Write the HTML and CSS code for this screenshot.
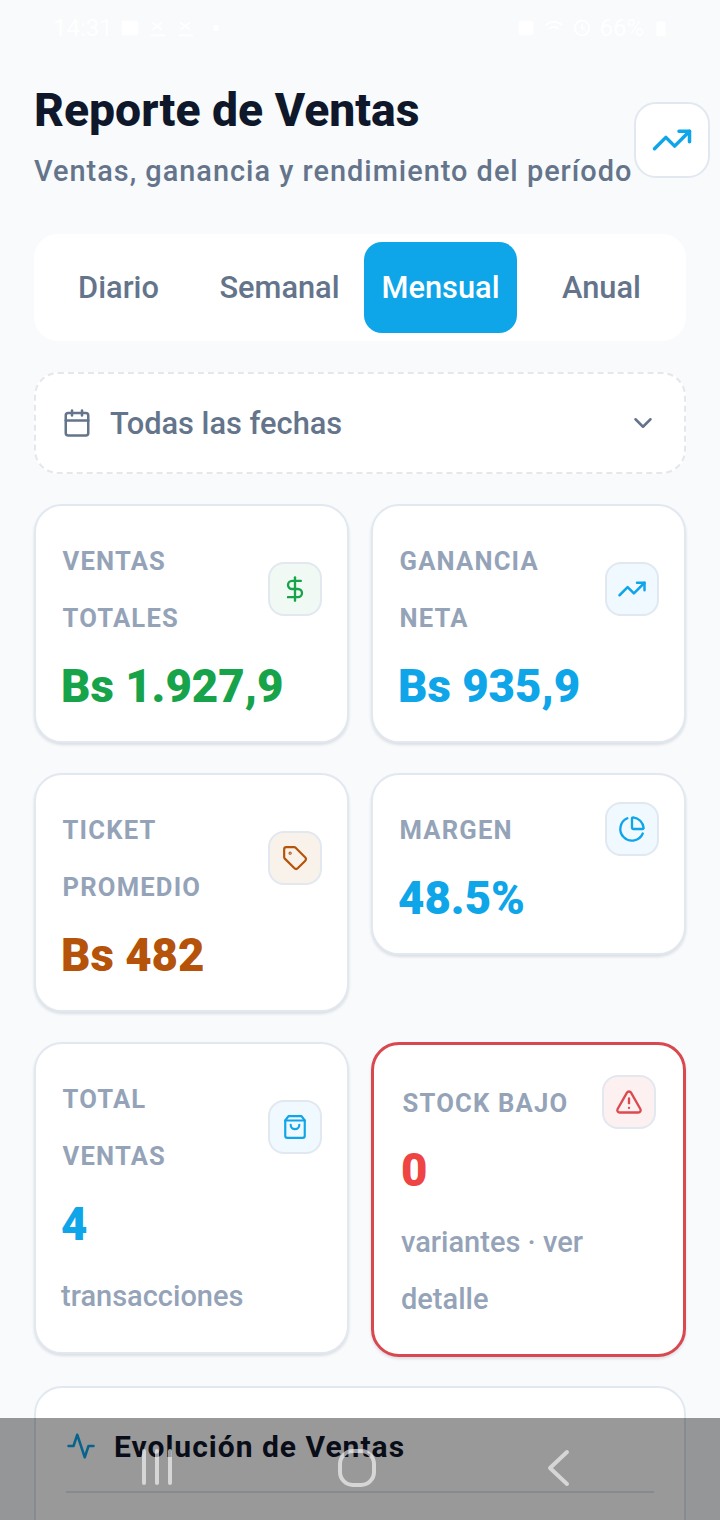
FILE: index.html
```html
<!DOCTYPE html>
<html lang="es">
<head>
  <meta charset="UTF-8" />
  <meta name="viewport" content="width=device-width, initial-scale=1.0" />
  <title>Reporte de Ventas</title>
  <link rel="stylesheet" href="styles.css">
</head>
<body>
  <div class="status-bar">
    <div class="status-side">
      <span>14:31</span>
      <svg class="status-icon" viewBox="0 0 24 24"><rect x="3" y="4" width="18" height="16" rx="2" fill="#fff"/></svg>
      <svg class="status-icon" viewBox="0 0 24 24" fill="none" stroke="#fff" stroke-width="2"><path d="M4 20h16M6 14l10-8M6 6l10 8"/></svg>
      <svg class="status-icon" viewBox="0 0 24 24" fill="none" stroke="#fff" stroke-width="2"><path d="M4 20h16M6 14l10-8M6 6l10 8"/></svg>
      <span class="status-dot"></span>
    </div>
    <div class="status-side">
      <svg class="status-icon" viewBox="0 0 24 24"><rect x="4" y="4" width="16" height="16" rx="3" fill="#fff"/></svg>
      <svg class="status-icon" viewBox="0 0 24 24" fill="none" stroke="#fff" stroke-width="2"><path d="M3 9c5-5 13-5 18 0M7 13c3-3 7-3 10 0"/></svg>
      <svg class="status-icon" viewBox="0 0 24 24" fill="none" stroke="#fff" stroke-width="2"><circle cx="12" cy="12" r="8"/><path d="M12 8v4l3 2"/></svg>
      <span>66%</span>
      <svg class="status-icon" viewBox="0 0 24 24"><rect x="7" y="5" width="10" height="16" rx="2" fill="#fff"/></svg>
    </div>
  </div>

  <main class="page">
    <header class="header">
      <div class="header-text">
        <h1>Reporte de Ventas</h1>
        <p>Ventas, ganancia y rendimiento del período</p>
      </div>
      <button class="header-btn">
        <svg class="icon icon-lg blue" viewBox="0 0 24 24"><polyline points="22 7 13.5 15.5 8.5 10.5 2 17"/><polyline points="16 7 22 7 22 13"/></svg>
      </button>
    </header>

    <nav class="tabs">
      <button class="tab">Diario</button>
      <button class="tab">Semanal</button>
      <button class="tab active">Mensual</button>
      <button class="tab">Anual</button>
    </nav>

    <div class="date-filter">
      <svg class="icon icon-date" viewBox="0 0 24 24"><path d="M8 2v4"/><path d="M16 2v4"/><rect x="3" y="4" width="18" height="18" rx="2"/><path d="M3 10h18"/></svg>
      <span class="date-text">Todas las fechas</span>
      <svg class="icon icon-chevron" viewBox="0 0 24 24"><polyline points="6 9 12 15 18 9"/></svg>
    </div>

    <section class="grid">
      <div class="card">
        <div class="card-head">
          <span class="label">Ventas totales</span>
          <span class="badge badge-green">
            <svg class="icon green" viewBox="0 0 24 24"><path d="M12 2v20"/><path d="M17 5H9.5a3.5 3.5 0 0 0 0 7h5a3.5 3.5 0 0 1 0 7H6"/></svg>
          </span>
        </div>
        <div class="value green">Bs 1.927,9</div>
      </div>

      <div class="card">
        <div class="card-head">
          <span class="label">Ganancia neta</span>
          <span class="badge badge-blue">
            <svg class="icon icon-md blue" viewBox="0 0 24 24"><polyline points="22 7 13.5 15.5 8.5 10.5 2 17"/><polyline points="16 7 22 7 22 13"/></svg>
          </span>
        </div>
        <div class="value blue">Bs 935,9</div>
      </div>

      <div class="card">
        <div class="card-head">
          <span class="label">Ticket promedio</span>
          <span class="badge badge-brown">
            <svg class="icon icon-sm brown" viewBox="0 0 24 24"><path d="M12.586 2.586A2 2 0 0 0 11.172 2H4a2 2 0 0 0-2 2v7.172a2 2 0 0 0 .586 1.414l8.704 8.704a2.426 2.426 0 0 0 3.42 0l6.58-6.58a2.426 2.426 0 0 0 0-3.42z"/><circle cx="7.5" cy="7.5" r=".5"/></svg>
          </span>
        </div>
        <div class="value brown">Bs 482</div>
      </div>

      <div class="card">
        <div class="card-head">
          <span class="label">Margen</span>
          <span class="badge badge-blue">
            <svg class="icon blue" viewBox="0 0 24 24"><path d="M21 12c.552 0 1.005-.449.95-.998a10 10 0 0 0-8.953-8.951c-.55-.055-.998.398-.998.95v8a1 1 0 0 0 1 1z"/><path d="M21.21 15.89A10 10 0 1 1 8 2.83"/></svg>
          </span>
        </div>
        <div class="value blue">48.5%</div>
      </div>

      <div class="card">
        <div class="card-head">
          <span class="label">Total ventas</span>
          <span class="badge badge-blue">
            <svg class="icon icon-sm blue" viewBox="0 0 24 24"><path d="M6 2 3 6v14a2 2 0 0 0 2 2h14a2 2 0 0 0 2-2V6l-3-4Z"/><path d="M3 6h18"/><path d="M16 10a4 4 0 0 1-8 0"/></svg>
          </span>
        </div>
        <div class="value blue">4</div>
        <div class="sub">transacciones</div>
      </div>

      <div class="card card-alert">
        <div class="card-head">
          <span class="label">Stock bajo</span>
          <span class="badge badge-red">
            <svg class="icon red-line" viewBox="0 0 24 24"><path d="m21.73 18-8-14a2 2 0 0 0-3.48 0l-8 14A2 2 0 0 0 4 21h16a2 2 0 0 0 1.73-3"/><path d="M12 9v4"/><path d="M12 17h.01"/></svg>
          </span>
        </div>
        <div class="value red">0</div>
        <div class="sub">variantes · ver detalle</div>
      </div>
    </section>

    <section class="chart-card">
      <div class="chart-head">
        <svg class="icon icon-date blue" viewBox="0 0 24 24"><path d="M22 12h-4l-3 9L9 3l-3 9H2"/></svg>
        <h2>Evolución de Ventas</h2>
      </div>
    </section>
  </main>

  <div class="nav-bar">
    <svg class="nav-icon" width="32" height="36" viewBox="0 0 32 36"><path d="M3 2v32M16 2v32M29 2v32"/></svg>
    <svg class="nav-icon" width="38" height="38" viewBox="0 0 38 38"><rect x="2" y="2" width="34" height="34" rx="13"/></svg>
    <svg class="nav-icon" width="24" height="38" viewBox="0 0 24 38"><path d="M20 3 3 19l17 16"/></svg>
  </div>
</body>
</html>
```

FILE: styles.css
```css
* { box-sizing: border-box; }

html, body {
  margin: 0;
  height: 1520px;
  overflow: hidden;
}
body {
  position: relative;
  font-family: Roboto, sans-serif;
  background-color: #f8fafc;
  color: #0f172a;
}
button {
  font: inherit;
  border: none;
  background: none;
  padding: 0;
}

/* status bar, white on a near white page */
.status-bar {
  height: 56px;
  padding: 0 48px 0 53px;
  display: flex;
  justify-content: space-between;
  align-items: center;
  color: #fff;
  font-size: 24px;
}
.status-side {
  display: flex;
  align-items: center;
  gap: 6px;
}
.status-icon {
  width: 22px;
  height: 22px;
}
.status-dot {
  width: 6px;
  height: 6px;
  margin-left: 10px;
  border-radius: 50%;
  background: #fff;
}

.page { padding: 0 34px; }

.icon {
  width: 28px;
  height: 28px;
  fill: none;
  stroke: currentColor;
  stroke-width: 2;
  stroke-linecap: round;
  stroke-linejoin: round;
  flex: none;
}
.icon-lg { width: 42px; height: 42px; }
.icon-md { width: 30px; height: 30px; }
.icon-sm { width: 26px; height: 26px; }
.icon-date { width: 30px; height: 30px; }
.icon-chevron { width: 30px; height: 30px; }

.green { color: #16a34a; }
.blue { color: #0ea5e9; }
.brown { color: #b45309; }
.red { color: #ef4444; }
.red-line { color: #dc4a4f; }

.header {
  display: flex;
  align-items: center;
  width: 676px;
  margin-top: 23px;
}
.header-text { flex: none; width: 600px; }
.header h1 {
  margin: 0;
  font-size: 46.3px;
  line-height: 62px;
  font-weight: 800;
}
.header p {
  margin: 8px 0 0;
  font-size: 28.9px;
  line-height: 44px;
  font-weight: 500;
  letter-spacing: 1px;
  color: #64748b;
  white-space: nowrap;
}
.header-btn {
  flex: none;
  width: 76px;
  height: 76px;
  margin-top: 7px;
  border: 2px solid #e2e8f0;
  border-radius: 22px;
  background: #fff;
  display: flex;
  align-items: center;
  justify-content: center;
}

.tabs {
  display: flex;
  gap: 8px;
  margin-top: 41px;
  padding: 8px;
  border-radius: 24px;
  background: #fff;
}
.tab {
  flex: 1;
  height: 91px;
  border-radius: 18px;
  font-size: 30.8px;
  font-weight: 500;
  color: #64748b;
}
.tab.active {
  background: #0ea5e9;
  color: #fff;
}

.date-filter {
  display: flex;
  align-items: center;
  height: 102px;
  margin-top: 31px;
  padding: 0 26px;
  border: 2px dashed #e5e7eb;
  border-radius: 24px;
  background: #fff;
  color: #64748b;
}
.date-text {
  flex: 1;
  margin-left: 18px;
  font-size: 30.8px;
  font-weight: 500;
}

.grid {
  display: grid;
  grid-template-columns: 1fr 1fr;
  gap: 30px 22px;
  align-items: start;
  margin-top: 30px;
}
.card {
  padding: 27px 25px;
  border: 2px solid #e2e8f0;
  border-radius: 28px;
  background: #fff;
  box-shadow: 0 2px 3px rgba(15, 23, 42, 0.12);
}
.card-alert {
  padding: 30px 27px 26px;
  border: 3px solid #d9474f;
}
.card-alert .value { margin-top: 12px; }
.card-head {
  display: flex;
  align-items: center;
  justify-content: space-between;
  gap: 20px;
}
.label {
  padding-left: 1.5px;
  font-size: 25.6px;
  line-height: 57px;
  font-weight: 700;
  letter-spacing: 1.2px;
  text-transform: uppercase;
  color: #94a3b8;
}
.badge {
  flex: none;
  width: 54px;
  height: 54px;
  margin-bottom: 3px;
  border: 2px solid #e2e8f0;
  border-radius: 16px;
  display: flex;
  align-items: center;
  justify-content: center;
}
.badge-green { background: #f0f9f3; }
.badge-blue { background: #f0f9ff; }
.badge-brown { background: #f9f2ea; }
.badge-red { background: #fdf0f0; }
.value {
  margin-top: 13px;
  font-size: 45.6px;
  line-height: 54px;
  font-weight: 900;
}
.sub {
  margin-top: 16px;
  font-size: 29px;
  line-height: 57px;
  font-weight: 500;
  color: #94a3b8;
}

.chart-card {
  height: 300px;
  margin-top: 29px;
  padding: 30px;
  border: 2px solid #e2e8f0;
  border-radius: 28px;
  background: #fff;
}
.chart-head {
  display: flex;
  align-items: center;
  gap: 18px;
  height: 75px;
  padding-bottom: 17px;
  border-bottom: 2px solid #e2e8f0;
}
.chart-head h2 {
  margin: 0;
  font-size: 30px;
  font-weight: 700;
  letter-spacing: 1px;
}

/* system navigation bar lies over the page */
.nav-bar {
  position: absolute;
  left: 0;
  right: 0;
  bottom: 0;
  height: 102px;
  background: rgba(0, 0, 0, 0.4);
}
.nav-icon {
  position: absolute;
  top: 31px;
  fill: none;
  stroke: rgba(255, 255, 255, 0.6);
  stroke-width: 4;
  stroke-linecap: round;
  stroke-linejoin: round;
}
.nav-icon:nth-child(1) { left: 141px; }
.nav-icon:nth-child(2) { left: 338px; }
.nav-icon:nth-child(3) { left: 547px; }
```
